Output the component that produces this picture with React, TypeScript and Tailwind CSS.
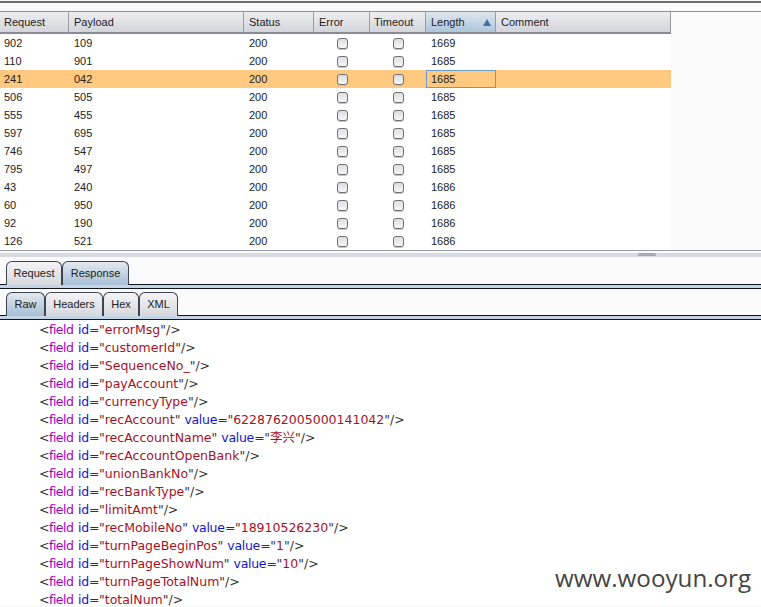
const font = { ui: "font-['Liberation_Sans',Arial,sans-serif]" };

const columns = [
  { label: "Request", width: "w-[69px]", pad: "pl-[4px]" },
  { label: "Payload", width: "w-[175px]", pad: "pl-[5px]" },
  { label: "Status", width: "w-[70px]", pad: "pl-[5px]" },
  { label: "Error", width: "w-[56px]", pad: "pl-[5px]" },
  { label: "Timeout", width: "w-[56px]", pad: "pl-[4px]" },
  { label: "Length", width: "w-[70px]", pad: "pl-[5px]" },
  { label: "Comment", width: "w-[175px]", pad: "pl-[5px]" },
];

const rows = [
  ["902", "109", "1669"],
  ["110", "901", "1685"],
  ["241", "042", "1685"],
  ["506", "505", "1685"],
  ["555", "455", "1685"],
  ["597", "695", "1685"],
  ["746", "547", "1685"],
  ["795", "497", "1685"],
  ["43", "240", "1686"],
  ["60", "950", "1686"],
  ["92", "190", "1686"],
  ["126", "521", "1686"],
];

type Field = { id: string; value?: string };

const fields: Field[] = [
  { id: "errorMsg" },
  { id: "customerId" },
  { id: "SequenceNo_" },
  { id: "payAccount" },
  { id: "currencyType" },
  { id: "recAccount", value: "6228762005000141042" },
  { id: "recAccountName", value: "李兴" },
  { id: "recAccountOpenBank" },
  { id: "unionBankNo" },
  { id: "recBankType" },
  { id: "limitAmt" },
  { id: "recMobileNo", value: "18910526230" },
  { id: "turnPageBeginPos", value: "1" },
  { id: "turnPageShowNum", value: "10" },
  { id: "turnPageTotalNum" },
  { id: "totalNum" },
];

const Checkbox = () => (
  <span className="block h-[11px] w-[11px] rounded-[3px] border border-[#6f7074] bg-gradient-to-b from-[#dedee1] to-[#f6f6f7] shadow-[0_1px_0_#c4c4c8]" />
);

const Tab = ({ label, width, active }: { label: string; width: string; active?: boolean }) => (
  <div
    className={`${width} -mb-px flex h-[24px] items-center justify-center rounded-t-[6px] border border-b-0 border-[#3d4450] text-[11px] text-[#222] ${
      active
        ? "bg-gradient-to-b from-[#e4e8ed] to-[#a6bfd6]"
        : "bg-gradient-to-b from-[#f4f4f6] to-[#d6d8de]"
    }`}
  >
    {label}
  </div>
);

const Attr = ({ name, width, value }: { name: string; width: string; value: string }) => (
  <>
    <span className={`${width} tracking-[-0.3px] text-[#1515c8]`}>{name}</span>
    <span className="w-[10px]">=</span>
    <span>"</span>
    <span className="text-[#a5121f]">{value}</span>
    <span>"</span>
  </>
);

const CodeLine = ({ field }: { field: Field }) => (
  <div className="flex h-[18px] items-center whitespace-pre pl-[40px] font-['DejaVu_Sans','Noto_Sans_CJK_SC',sans-serif] text-[12.5px] leading-none text-[#333]">
    <span className="-ml-px w-[10px]">{"<"}</span>
    <span className="mr-[4px] w-[25px] tracking-[-0.5px] text-[#a400c4]">field</span>
    <Attr name="id" width="w-[11px]" value={field.id} />
    {field.value && (
      <>
        <span className="w-[4px]" />
        <Attr name="value" width="w-[33px]" value={field.value} />
      </>
    )}
    <span>{"/>"}</span>
  </div>
);

export default function App() {
  return (
    <div className={`${font.ui} relative h-[607px] w-[761px] overflow-hidden bg-[#fafafa]`}>
      <div className="mt-px h-[2px] bg-[#6e6e6e]" />
      <div className="h-[8px]" />

      {/* results table */}
      <div className="h-px bg-[#8f9199]" />
      <div className="flex h-[238px] flex-col">
        <div className="flex h-[22px] w-[671px] border-b-2 border-[#8a8c94]">
          {columns.map((col) => (
            <div
              key={col.label}
              className={`${col.width} ${col.pad} relative flex items-center border-r border-[#9a9ca4] text-[11px] text-[#222] ${
                col.label === "Length"
                  ? "bg-gradient-to-b from-[#dfe6ee] to-[#adc6db]"
                  : "bg-gradient-to-b from-[#eeeef1] to-[#d3d5dc]"
              }`}
            >
              {col.label}
              {col.label === "Length" && (
                <svg className="absolute right-[4px] top-[7px]" width="8" height="7" viewBox="0 0 8 7">
                  <path d="M4 0 L8 7 L0 7 Z" fill="#3f70a6" />
                </svg>
              )}
            </div>
          ))}
        </div>
        {rows.map((row, i) => {
          const selected = i === 2;
          return (
            <div
              key={row[0]}
              className={`flex h-[18px] w-[671px] items-center text-[11px] text-[#222] ${
                selected ? "bg-[#ffc97f]" : "bg-white"
              }`}
            >
              <div className="w-[69px] pl-[4px]">{row[0]}</div>
              <div className="w-[175px] pl-[5px]">{row[1]}</div>
              <div className="w-[70px] pl-[5px]">200</div>
              <div className="flex w-[56px] pl-[23px]">
                <Checkbox />
              </div>
              <div className="flex w-[56px] pl-[23px]">
                <Checkbox />
              </div>
              <div
                className={`flex h-[18px] w-[70px] items-center pl-[5px] ${
                  selected ? "border border-[#6b9ccd]" : ""
                }`}
              >
                <span className={selected ? "-ml-px" : ""}>{row[2]}</span>
              </div>
            </div>
          );
        })}
      </div>

      {/* splitter */}
      <div className="h-px bg-[#9a9ca6]" />
      <div className="h-[2px] bg-[#fafafa]" />
      <div className="flex h-[4px] justify-end bg-[#d8dae2] pr-[105px]">
        <div className="h-[3px] w-[18px] rounded-t-[2px] bg-[#a8a9b0]" />
      </div>

      {/* request / response tabs */}
      <div className="flex h-[27px] items-end pl-[6px]">
        <Tab label="Request" width="w-[56px]" />
        <Tab label="Response" width="w-[67px]" active />
      </div>
      <div className="h-px bg-[#10141c]" />
      <div className="h-[3px] bg-[#c2d4e6]" />
      <div className="h-px bg-[#10141c]" />

      {/* raw / headers tabs */}
      <div className="flex h-[26px] items-end pl-[6px]">
        <Tab label="Raw" width="w-[39px]" active />
        <Tab label="Headers" width="w-[58px]" />
        <Tab label="Hex" width="w-[36px]" />
        <Tab label="XML" width="w-[39px]" />
      </div>
      <div className="h-px bg-[#10141c]" />
      <div className="h-[3px] bg-[#c2d4e6]" />
      <div className="h-px bg-[#10141c]" />

      {/* message body */}
      <div className="h-[285px] bg-white pt-px">
        {fields.map((f) => (
          <CodeLine key={f.id} field={f} />
        ))}
      </div>

      <div className="absolute left-[555px] top-[563px] font-['Open_Sans',sans-serif] text-[24.2px] leading-[30px] text-[#444]">
        www.wooyun.org
      </div>
    </div>
  );
}
